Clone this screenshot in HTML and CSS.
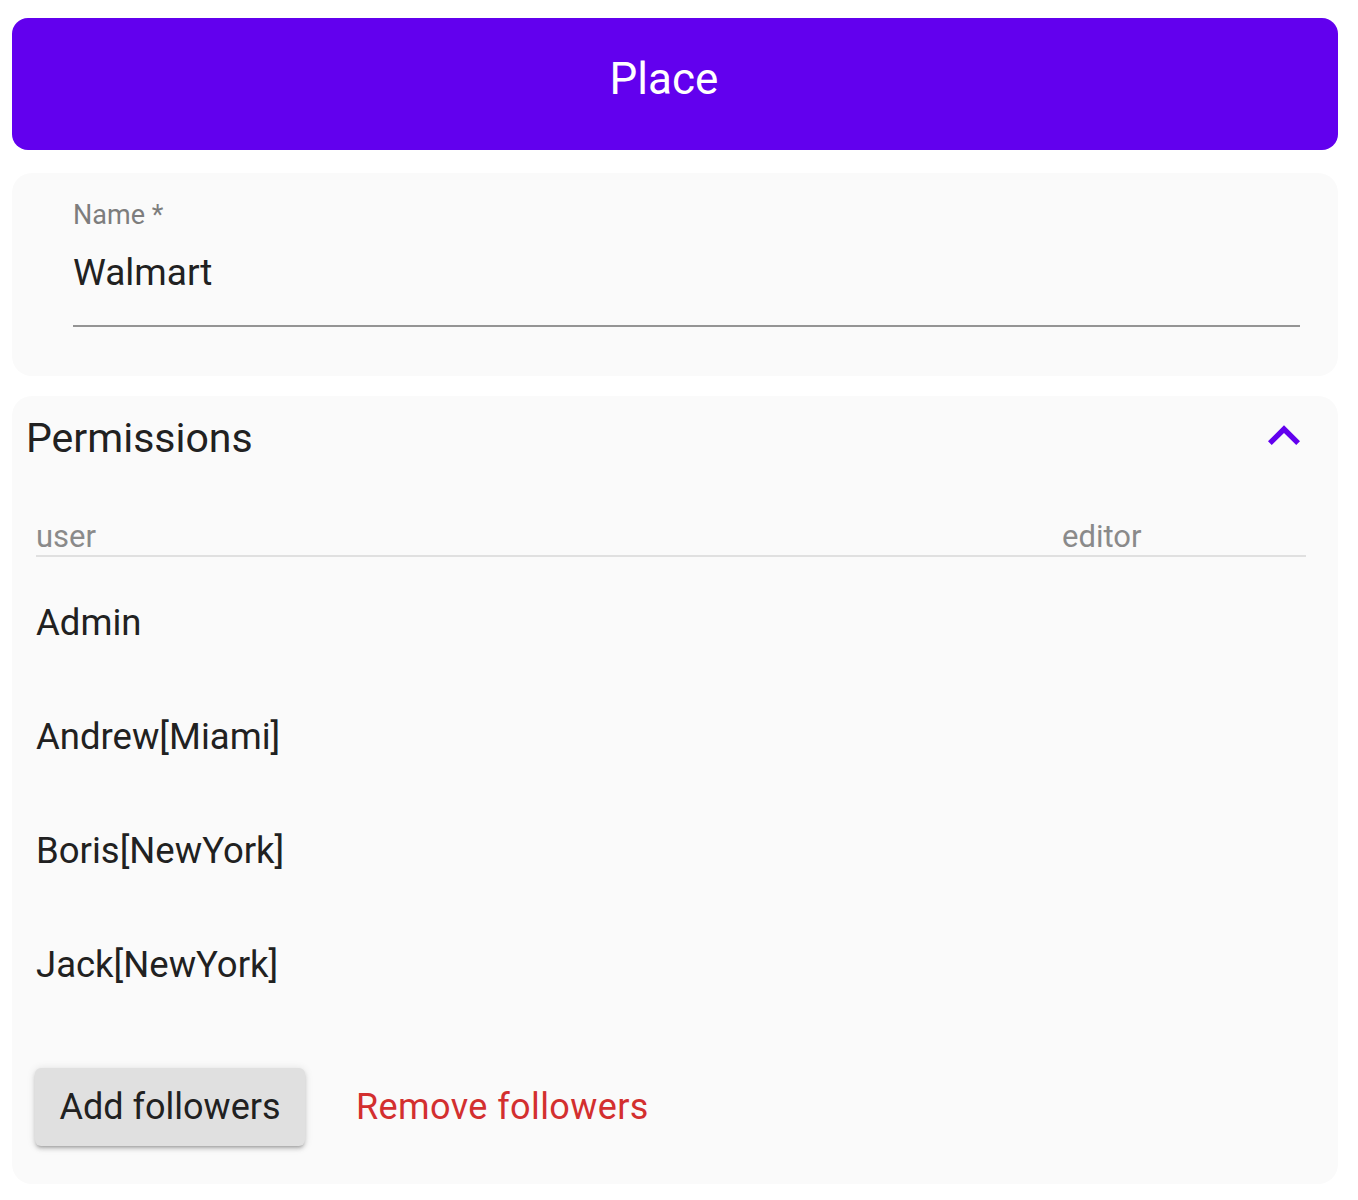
FILE: index.html
```html
<!DOCTYPE html>
<html lang="en">
<head>
<meta charset="utf-8">
<title>Place</title>
<link rel="stylesheet" href="styles.css">
</head>
<body>
<header class="appbar">Place</header>

<section class="card name-card">
  <label class="field-label">Name *</label>
  <div class="field-input">Walmart</div>
</section>

<section class="card perm-card">
  <div class="perm-head">
    <h2 class="perm-title">Permissions</h2>
    <svg class="chevron" viewBox="0 0 24 24" width="64" height="64" aria-hidden="true">
      <path d="M12 8l-6 6 1.41 1.41L12 10.83l4.59 4.58L18 14z" fill="#6200ee"/>
    </svg>
  </div>
  <div class="table">
    <div class="thead">
      <div class="th">user</div>
      <div class="th">editor</div>
    </div>
    <div class="tbody">
      <div class="tr"><div class="td">Admin</div><div class="td"></div></div>
      <div class="tr"><div class="td">Andrew[Miami]</div><div class="td"></div></div>
      <div class="tr"><div class="td">Boris[NewYork]</div><div class="td"></div></div>
      <div class="tr"><div class="td">Jack[NewYork]</div><div class="td"></div></div>
    </div>
  </div>
  <div class="actions">
    <button class="btn btn-add">Add followers</button>
    <button class="btn btn-remove">Remove followers</button>
  </div>
</section>
</body>
</html>
```

FILE: styles.css
```css
* { box-sizing: border-box; }
html, body { background: #ffffff; }
body {
  margin: 0;
  padding: 18px 20px 16px 12px;
  font-family: Roboto, "Liberation Sans", sans-serif;
  color: #212121;
}
.appbar {
  height: 132px;
  border-radius: 16px;
  background: #6200ee;
  color: #ffffff;
  display: flex;
  align-items: center;
  justify-content: center;
  font-size: 44px;
  font-weight: 400;
  padding: 0 22px 10px 0;
}
.card {
  background: #fafafa;
  border-radius: 20px;
}
.name-card {
  margin-top: 23px;
  height: 203px;
  padding: 26px 38px 0 61px;
  display: flex;
  flex-direction: column;
}
.field-label {
  font-size: 27px;
  line-height: 32px;
  color: #7d7d7d;
}
.field-input {
  margin-top: 20px;
  font-size: 37px;
  line-height: 44px;
  color: #212121;
  padding-bottom: 30px;
  border-bottom: 2px solid #949494;
}
.perm-card {
  margin-top: 20px;
  height: 788px;
  padding: 17px 32px 0 14px;
}
.perm-head {
  display: flex;
  align-items: center;
  justify-content: space-between;
  height: 50px;
}
.perm-title {
  margin: 0;
  font-size: 41px;
  font-weight: 400;
  line-height: 50px;
  color: #212121;
}
.chevron {
  margin-right: -10px;
  margin-top: -4px;
}
.table {
  margin: 56px 0 0 10px;
}
.thead {
  display: grid;
  grid-template-columns: 1fr 244px;
  border-bottom: 2px solid #e0e0e0;
}
.th {
  font-size: 31px;
  line-height: 36px;
  color: #8a8a8a;
}
.tbody {
  padding-top: 9px;
}
.tr {
  display: grid;
  grid-template-columns: 1fr 244px;
  height: 114px;
  align-items: center;
}
.td {
  font-size: 36.5px;
  line-height: 44px;
  color: #212121;
}
.actions {
  margin-top: 46px;
  padding-left: 9px;
  display: flex;
  align-items: center;
}
.btn {
  font-family: inherit;
  font-size: 36px;
  border: none;
  background: none;
  cursor: pointer;
  padding: 0;
}
.btn-add {
  width: 270px;
  height: 78px;
  background: #e0e0e0;
  border-radius: 6px;
  color: #212121;
  box-shadow: 0 3px 3px -2px rgba(0,0,0,0.2), 0 3px 4px 0 rgba(0,0,0,0.14), 0 1px 8px 0 rgba(0,0,0,0.12);
}
.btn-remove {
  margin-left: 51px;
  color: #d32f2f;
  letter-spacing: 0.4px;
}
```
